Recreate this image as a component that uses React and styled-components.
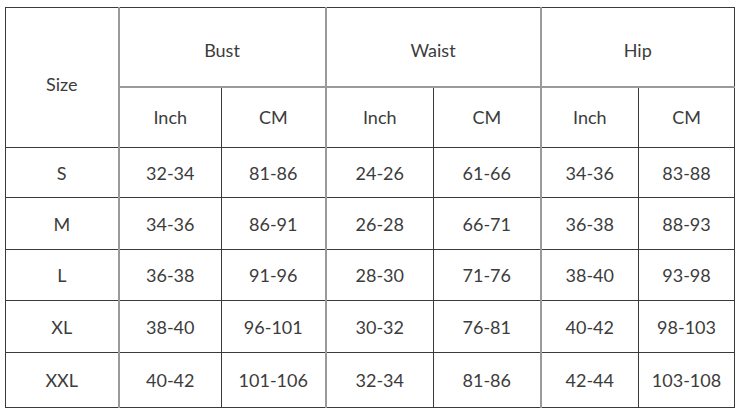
import React from 'react';
import styled, { createGlobalStyle } from 'styled-components';

const GlobalStyle = createGlobalStyle`
    body {
        margin: 0;
        background: #ffffff;
        font-family: Lato, "Noto Sans", sans-serif;
    }
`

const Page = styled.div`
    padding: 7px 0 0 5px;
`

const Table = styled.table`
    border-collapse: collapse;
    table-layout: fixed;
    width: 729px;
    color: #3c3c3c;
    font-size: 18px;
    border: 1px solid #444;
`

const Cell = styled.td`
    padding: 0;
    text-align: center;
    vertical-align: middle;
    border-top: 1px solid #3a3a3a;
    border-bottom: 1px solid #3a3a3a;
    border-left: ${props => props.$group ? '2px solid #9a9a9a' : '1px solid #3a3a3a'};
    border-right: 1px solid #3a3a3a;
`

const HeadCell = styled(Cell)`
    padding-top: ${props => props.$shift || 0}px;
    border-bottom: ${props => props.$soft ? '2px solid #9a9a9a' : '1px solid #3a3a3a'};
`

const Row = styled.tr`
    height: ${props => props.$h}px;
`

const COLS = [113, 103, 104, 108, 107, 98, 96]

const SIZES = [
    { size: 'S', h: 50, values: ['32-34', '81-86', '24-26', '61-66', '34-36', '83-88'] },
    { size: 'M', h: 52, values: ['34-36', '86-91', '26-28', '66-71', '36-38', '88-93'] },
    { size: 'L', h: 51, values: ['36-38', '91-96', '28-30', '71-76', '38-40', '93-98'] },
    { size: 'XL', h: 52, values: ['38-40', '96-101', '30-32', '76-81', '40-42', '98-103'] },
    { size: 'XXL', h: 55, values: ['40-42', '101-106', '32-34', '81-86', '42-44', '103-108'] },
]

const GROUPS = ['Bust', 'Waist', 'Hip']

const App = () => {
    return <Page>
        <GlobalStyle />
        <Table>
            <colgroup>
                {COLS.map((w, i) => <col key={i} style={{ width: w }} />)}
            </colgroup>
            <tbody>
                <Row $h={79}>
                    <HeadCell rowSpan={2} $shift={12}>Size</HeadCell>
                    {GROUPS.map(g => <HeadCell key={g} colSpan={2} $group $soft $shift={6}>{g}</HeadCell>)}
                </Row>
                <Row $h={61}>
                    {GROUPS.map(g => <React.Fragment key={g}>
                        <HeadCell $group>Inch</HeadCell>
                        <HeadCell>CM</HeadCell>
                    </React.Fragment>)}
                </Row>
                {SIZES.map(item => <Row key={item.size} $h={item.h}>
                    <Cell>{item.size}</Cell>
                    {item.values.map((v, i) => <Cell key={i} $group={i % 2 === 0}>{v}</Cell>)}
                </Row>)}
            </tbody>
        </Table>
    </Page>
}

export default App;
